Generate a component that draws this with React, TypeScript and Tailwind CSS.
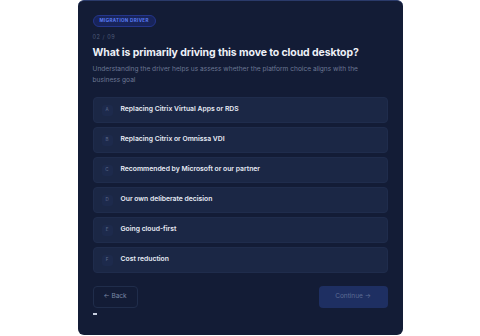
import React from "react";

const options = [
  { key: "A", label: "Replacing Citrix Virtual Apps or RDS" },
  { key: "B", label: "Replacing Citrix or Omnissa VDI" },
  { key: "C", label: "Recommended by Microsoft or our partner" },
  { key: "D", label: "Our own deliberate decision" },
  { key: "E", label: "Going cloud-first" },
  { key: "F", label: "Cost reduction" },
];

export default function App() {
  return (
    <div className="w-[480px] h-[336px] bg-white" style={{ fontFamily: "Inter, 'Noto Sans', sans-serif" }}>
      <div className="mx-auto w-[325px] h-[335px] bg-[#131c36] rounded-md border-t border-[#2a3a6a] px-[15px] pt-[14px] flex flex-col">
        <div className="flex">
          <span className="h-[12px] px-[6px] flex items-center rounded-full bg-[#18245a] border border-[#24358a] text-[#5b7df5] text-[4.5px] font-bold tracking-[0.08em]">
            MIGRATION DRIVER
          </span>
        </div>
        <div className="mt-[6px] text-[5.5px] text-[#4d5a78] tracking-[0.1em] leading-[8px]">02 / 09</div>
        <h1 className="mt-[4px] text-[10.5px] font-bold text-[#eef1f8] leading-[16px] tracking-[-0.01em]">
          What is primarily driving this move to cloud desktop?
        </h1>
        <p className="mt-[3px] text-[6.6px] text-[#6b7794] leading-[11px] pr-[18px]">
          Understanding the driver helps us assess whether the platform choice aligns with the business goal
        </p>
        <div className="mt-[11px] flex flex-col gap-[4px]">
          {options.map(o => (
            <div key={o.key} className="h-[26px] rounded-[4px] bg-[#1b2745] border border-[#1f2c4c] flex items-center pl-[8px]">
              <span className="w-[11px] h-[11px] rounded-[3px] bg-[#1d2a4c] flex items-center justify-center text-[4.5px] text-[#5f6c8c]">
                {o.key}
              </span>
              <span className="ml-[8px] text-[6.8px] font-semibold text-[#e8ecf5] -mt-[2px]">{o.label}</span>
            </div>
          ))}
        </div>
        <div className="mt-[13px] flex justify-between">
          <button className="w-[45px] h-[22px] rounded-[4px] border border-[#202d4b] text-[6.5px] text-[#7a87a4]">
            ← Back
          </button>
          <button className="w-[69px] h-[22px] rounded-[4px] bg-[#1e2f62] text-[6.5px] text-[#5d6c94]">
            Continue →
          </button>
        </div>
        <div className="mt-[5px] w-[4px] h-[2px] bg-[#c8cfdf]"></div>
      </div>
    </div>
  );
}
